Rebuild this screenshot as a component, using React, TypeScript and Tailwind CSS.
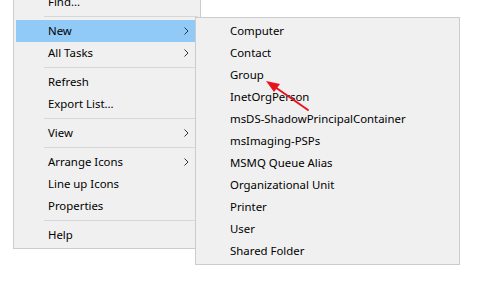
import React from "react";

type Item = { label?: string; sub?: boolean; sep?: boolean; active?: boolean };

const leftItems: Item[] = [
  { label: "Find..." },
  { sep: true },
  { label: "New", sub: true, active: true },
  { label: "All Tasks", sub: true },
  { sep: true },
  { label: "Refresh" },
  { label: "Export List..." },
  { sep: true },
  { label: "View", sub: true },
  { sep: true },
  { label: "Arrange Icons", sub: true },
  { label: "Line up Icons" },
  { label: "Properties" },
  { sep: true },
  { label: "Help" },
];

const subItems = [
  "Computer",
  "Contact",
  "Group",
  "InetOrgPerson",
  "msDS-ShadowPrincipalContainer",
  "msImaging-PSPs",
  "MSMQ Queue Alias",
  "Organizational Unit",
  "Printer",
  "User",
  "Shared Folder",
];

function Chevron() {
  return (
    <svg width="5" height="8" viewBox="0 0 5 8" className="absolute right-[9px] top-[7px]">
      <path d="M0.5 0.5 L4 4 L0.5 7.5" fill="none" stroke="#333" strokeWidth="1" />
    </svg>
  );
}

export default function App() {
  return (
    <div className="relative w-[485px] h-[282px] overflow-hidden bg-white text-[11.4px] text-black font-['Noto_Sans',sans-serif]">
      <div className="ml-[13px] mt-[-12px] w-[188px] border border-[#cccccc] bg-[#f0f0f0] p-[2px]">
        {leftItems.map((it, i) =>
          it.sep ? (
            <div key={i} className="h-[7px] flex items-center pl-[28px]">
              <div className="h-px w-full bg-[#d7d7d7]" />
            </div>
          ) : (
            <div
              key={i}
              className={`relative h-[22px] flex items-center pl-[32px] ${it.active ? "bg-[#91c9f7]" : ""}`}
            >
              <span className="leading-none">{it.label}</span>
              {it.sub && <Chevron />}
            </div>
          )
        )}
      </div>

      <div className="absolute left-[195px] top-[17px] w-[265px] border border-[#cccccc] bg-[#f0f0f0] p-[2px]">
        {subItems.map((s) => (
          <div key={s} className="h-[22px] flex items-center pl-[32px]">
            <span className="leading-none">{s}</span>
          </div>
        ))}
      </div>

      <svg className="absolute left-0 top-0" width="485" height="282" viewBox="0 0 485 282">
        <line x1="308" y1="110" x2="275" y2="87" stroke="#e8141c" strokeWidth="2" strokeLinecap="round" />
        <polygon points="266,81 280,84 274,92" fill="#e8141c" />
      </svg>
    </div>
  );
}
